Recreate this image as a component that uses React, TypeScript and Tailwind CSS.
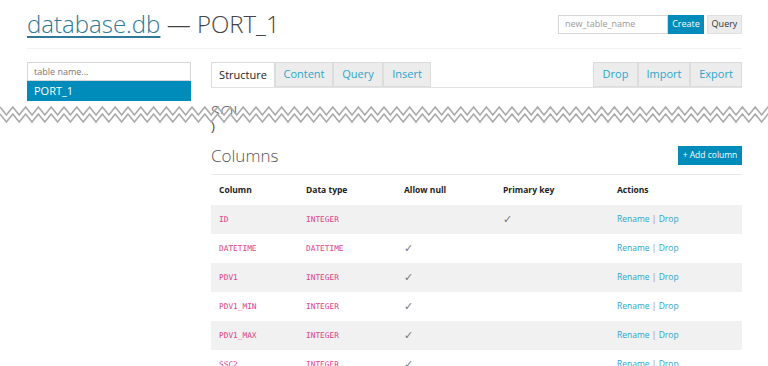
import React from "react";

const columns = [
  { name: "ID", type: "INTEGER", nullable: false, pk: true },
  { name: "DATETIME", type: "DATETIME", nullable: true, pk: false },
  { name: "PDV1", type: "INTEGER", nullable: true, pk: false },
  { name: "PDV1_MIN", type: "INTEGER", nullable: true, pk: false },
  { name: "PDV1_MAX", type: "INTEGER", nullable: true, pk: false },
  { name: "SSC2", type: "INTEGER", nullable: true, pk: false },
];

function Zigzag() {
  // two parallel torn-page lines across the whole width
  const period = 12.8;
  const line = (top: number) => {
    const pts: string[] = [];
    for (let i = 0; i <= 122; i++) {
      const x = i * (period / 2);
      pts.push(`${x},${i % 2 === 0 ? top : top + 8}`);
    }
    return pts.join(" ");
  };
  return (
    <svg
      className="absolute left-0 top-[104px] pointer-events-none"
      width="768"
      height="22"
      viewBox="0 0 768 22"
    >
      <polyline points={line(3)} fill="none" stroke="#ababab" strokeWidth="1.7" />
      <polyline points={line(10)} fill="none" stroke="#ababab" strokeWidth="1.7" />
    </svg>
  );
}

function Tab({ label, active }: { label: string; active?: boolean }) {
  return (
    <div
      className={
        active
          ? "h-full flex items-center justify-center border border-[#dcdcdc] border-b-0 bg-white text-[#222]"
          : "h-full flex items-center justify-center border border-[#dcdcdc] bg-[#ececec] text-[#2ba6cb]"
      }
    >
      {label}
    </div>
  );
}

export default function App() {
  return (
    <div className="relative h-[366px] w-[768px] overflow-hidden bg-white font-['Open_Sans',sans-serif] text-[#333]">
      {/* Header */}
      <div className="ml-[27px] w-[715px] h-[49px] flex items-center justify-between border-b border-[#f2f2f2]">
        <h1 className="text-[24px] font-light leading-none text-[#444]">
          <a className="text-[#2f7896] underline underline-offset-[3px] decoration-[1.5px]">database.db</a> — PORT_1
        </h1>
        <div className="flex items-center">
          <div className="w-[110px] h-[19px] border border-[#d6d6d6] flex items-center pl-[6px] text-[9px] text-[#999]">
            new_table_name
          </div>
          <div className="w-[36px] h-[19px] bg-[#008cba] text-white text-[9px] flex items-center justify-center">
            Create
          </div>
          <div className="ml-[3px] w-[35px] h-[19px] bg-[#ececec] border border-[#e0e0e0] text-[#333] text-[9px] flex items-center justify-center">
            Query
          </div>
        </div>
      </div>

      {/* Top body (torn off below) */}
      <div className="h-[65px] overflow-hidden">
        <div className="ml-[27px] w-[715px] mt-[13px] flex gap-[20px]">
          <div className="w-[164px] shrink-0">
            <div className="h-[19px] border border-[#d6d6d6] flex items-center pl-[6px] text-[9px] text-[#777]">
              table name...
            </div>
            <div className="h-[20px] bg-[#008cba] text-white text-[11px] flex items-center pl-[7px]">
              PORT_1
            </div>
          </div>
          <div className="flex-1">
            <div className="h-[26px] flex justify-between border-b border-[#e2e2e2] text-[11px]">
              <div className="flex h-full">
                <div className="w-[64px]"><Tab label="Structure" active /></div>
                <div className="w-[58px]"><Tab label="Content" /></div>
                <div className="w-[50px]"><Tab label="Query" /></div>
                <div className="w-[48px]"><Tab label="Insert" /></div>
              </div>
              <div className="flex h-full">
                <div className="w-[45px]"><Tab label="Drop" /></div>
                <div className="w-[52px]"><Tab label="Import" /></div>
                <div className="w-[52px]"><Tab label="Export" /></div>
              </div>
            </div>
            <h2 className="mt-[14px] text-[17px] leading-[20px] font-light text-[#555]">SQL</h2>
          </div>
        </div>
      </div>

      {/* Bottom body */}
      <div className="ml-[211px] w-[531px]">
        <div className="h-[20px] leading-[20px] text-[13px] text-[#444] pt-[2px]">)</div>
        <div className="mt-[11px] h-[20px] flex items-center justify-between">
          <h2 className="text-[17px] leading-none font-light text-[#555]">Columns</h2>
          <div className="w-[64px] h-[19px] bg-[#008cba] text-white text-[8.5px] flex items-center justify-center">
            + Add column
          </div>
        </div>
        <div className="mt-[9px] border-t border-[#e8e8e8]">
          <div className="grid grid-cols-[95px_98px_99px_114px_1fr] h-[30px] items-center text-[8.5px] font-bold text-[#222]">
            <div className="pl-[8px]">Column</div>
            <div>Data type</div>
            <div>Allow null</div>
            <div>Primary key</div>
            <div>Actions</div>
          </div>
          {columns.map((c, i) => (
            <div
              key={c.name}
              className={
                "grid grid-cols-[95px_98px_99px_114px_1fr] h-[29px] items-center " +
                (i % 2 === 0 ? "bg-[#f1f1f1]" : "bg-white")
              }
            >
              <div className="pl-[8px] font-['DejaVu_Sans_Mono',monospace] text-[7.8px] text-[#e0408a]">{c.name}</div>
              <div className="font-['DejaVu_Sans_Mono',monospace] text-[7.8px] text-[#e0408a]">{c.type}</div>
              <div className="text-[11px] text-[#777]">{c.nullable ? "✓" : ""}</div>
              <div className="text-[11px] text-[#777]">{c.pk ? "✓" : ""}</div>
              <div className="text-[8.5px] text-[#2ba6cb]">
                Rename <span className="text-[#a08a78]">|</span> Drop
              </div>
            </div>
          ))}
        </div>
      </div>

      <Zigzag />
    </div>
  );
}
